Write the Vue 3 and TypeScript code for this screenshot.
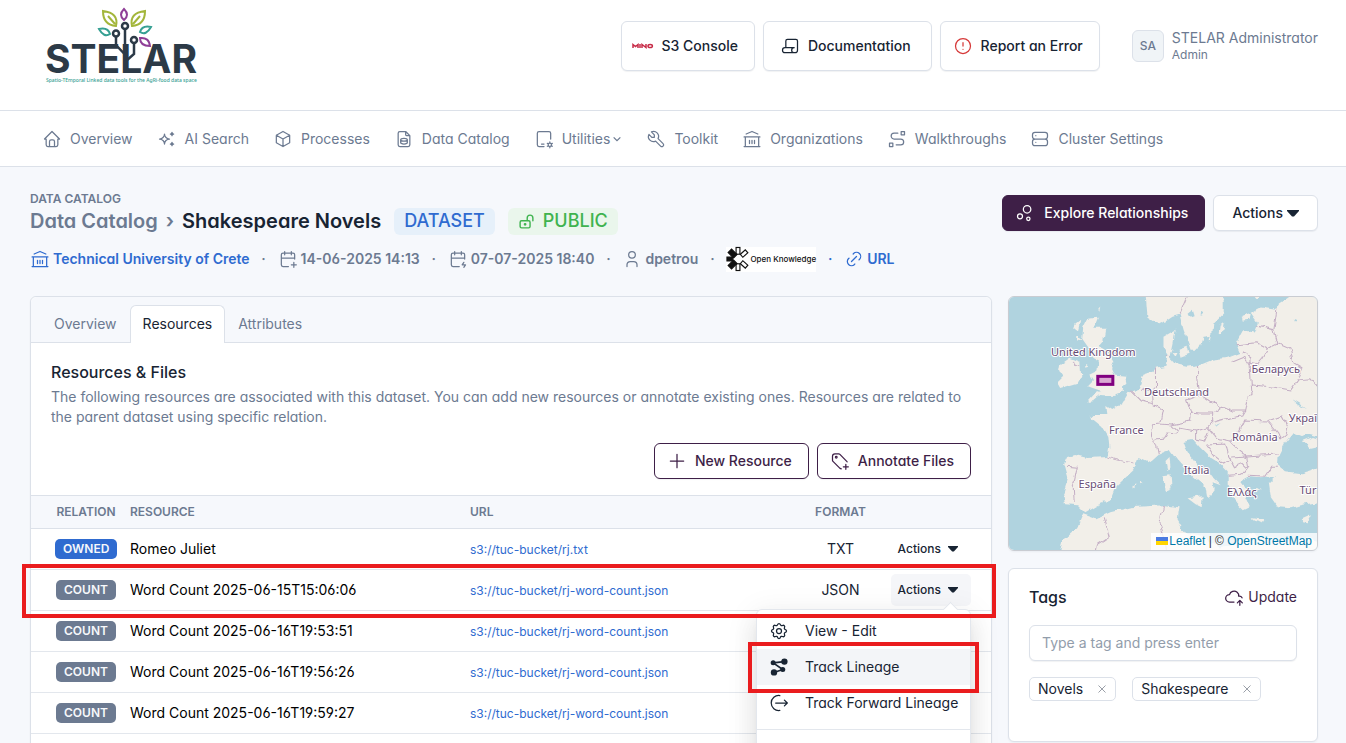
<script setup lang="ts">
import { ref } from 'vue'

interface NavItem { label: string; icon: string; caret?: boolean }
interface Resource { relation: 'OWNED' | 'COUNT'; name: string; url: string; format: string; open?: boolean }

const icons: Record<string, string> = {
  home: 'M5 12H3l9-9l9 9h-2M5 12v7a2 2 0 0 0 2 2h10a2 2 0 0 0 2-2v-7M9 21v-6a2 2 0 0 1 2-2h2a2 2 0 0 1 2 2v6',
  sparkles: 'M16 18a2 2 0 0 1 2 2a2 2 0 0 1 2-2a2 2 0 0 1-2-2a2 2 0 0 1-2 2zM16 6a2 2 0 0 1 2 2a2 2 0 0 1 2-2a2 2 0 0 1-2-2a2 2 0 0 1-2 2zM9 18a6 6 0 0 1 6-6a6 6 0 0 1-6-6a6 6 0 0 1-6 6a6 6 0 0 1 6 6z',
  box: 'M12 3l8 4.5v9l-8 4.5l-8-4.5v-9zM12 12l8-4.5M12 12v9M12 12L4 7.5',
  fileDb: 'M14 3v4a1 1 0 0 0 1 1h4M17 21H7a2 2 0 0 1-2-2V5a2 2 0 0 1 2-2h7l5 5v11a2 2 0 0 1-2 2zM8 12.8a4 1.7 0 1 0 8 0a4 1.7 0 1 0-8 0M8 12.8v3.5c0 1 1.8 1.7 4 1.7s4-.7 4-1.7v-3.5',
  tabletCog: 'M12 21H6a2 2 0 0 1-2-2V5a2 2 0 0 1 2-2h12a2 2 0 0 1 2 2v7M9 18h3M17 19a2 2 0 1 0 4 0a2 2 0 1 0-4 0M19 15.5V17M19 21v1.5M22 17.25l-1.3.75M17.3 20l-1.3.75M16 17.25l1.3.75M20.7 20l1.3.75',
  tool: 'M7 10h3V7L6.5 3.5a6 6 0 0 1 8 8l6 6a2 2 0 0 1-3 3l-6-6a6 6 0 0 1-8-8z',
  bank: 'M5 6l7-3l7 3M2.5 9.5h19M4 9.5V21M20 9.5V21M2.5 21h19M9 13.5v4M12 13.5v4M15 13.5v4',
  route: 'M3 17h4v4H3zM17 3h4v4h-4zM11 19h5.5a3.5 3.5 0 0 0 0-7h-8a3.5 3.5 0 0 1 0-7H13',
  server: 'M6 4h12a3 3 0 0 1 3 3v2a3 3 0 0 1-3 3H6a3 3 0 0 1-3-3V7a3 3 0 0 1 3-3zM6 12h12a3 3 0 0 1 3 3v2a3 3 0 0 1-3 3H6a3 3 0 0 1-3-3v-2a3 3 0 0 1 3-3zM7 8v.01M7 16v.01',
  script: 'M17 20H6a3 3 0 0 1 0-6h11a3 3 0 0 0 0 6h1a3 3 0 0 0 3-3V6a2 2 0 0 0-2-2H9a2 2 0 0 0-2 2v8',
  alert: 'M3 12a9 9 0 1 0 18 0a9 9 0 0 0-18 0M12 8v4M12 16v.01',
  calPlus: 'M12.5 21H6a2 2 0 0 1-2-2V7a2 2 0 0 1 2-2h12a2 2 0 0 1 2 2v5M16 3v4M8 3v4M4 11h16M16 19h6M19 16v6',
  calBolt: 'M13.5 21H6a2 2 0 0 1-2-2V7a2 2 0 0 1 2-2h12a2 2 0 0 1 2 2v5M16 3v4M8 3v4M4 11h16M19 16l-2 3h4l-2 3',
  user: 'M8 7a4 4 0 1 0 8 0a4 4 0 0 0-8 0M6 21v-2a4 4 0 0 1 4-4h4a4 4 0 0 1 4 4v2',
  link: 'M9 15l6-6M11 6l.463-.536a5 5 0 0 1 7.071 7.072L18 13M13 18l-.397.534a5.068 5.068 0 0 1-7.127 0a4.972 4.972 0 0 1 0-7.071L6 11',
  lockOpen: 'M3 13a2 2 0 0 1 2-2h10a2 2 0 0 1 2 2v6a2 2 0 0 1-2 2H5a2 2 0 0 1-2-2zM9 16a1 1 0 1 0 2 0a1 1 0 0 0-2 0M13 11V7a4 4 0 1 1 8 0v4',
  bubbles: 'M3 16a3 3 0 1 0 6 0a3 3 0 1 0-6 0M14 19a2 2 0 1 0 4 0a2 2 0 1 0-4 0M10 7.5a4.5 4.5 0 1 0 9 0a4.5 4.5 0 1 0-9 0',
  plus: 'M12 4v16M4 12h16',
  tagPlus: 'M6.5 7.5a1 1 0 1 0 2 0a1 1 0 1 0-2 0M20.5 13l-.1-.3l-8.5-8.7a2 2 0 0 0-1.4-.6H6a3 3 0 0 0-3 3v4.6a2 2 0 0 0 .6 1.4l8.4 8.4l1.5.6M16 19h6M19 16v6',
  cloudUp: 'M12 18H6.657C4.085 18 2 16 2 13.517c0-2.475 2.085-4.482 4.657-4.482c.393-1.762 1.794-3.2 3.675-3.773c1.88-.572 3.956-.193 5.444 1c1.488 1.19 2.162 3.007 1.77 4.769h.99c1.38 0 2.573.813 3.13 1.99M19 22v-6M22 19l-3-3l-3 3',
  gear: 'M10.325 4.317c.426-1.756 2.924-1.756 3.35 0a1.724 1.724 0 0 0 2.573 1.066c1.543-.94 3.31.826 2.37 2.37a1.724 1.724 0 0 0 1.065 2.572c1.756.426 1.756 2.924 0 3.35a1.724 1.724 0 0 0-1.066 2.573c.94 1.543-.826 3.31-2.37 2.37a1.724 1.724 0 0 0-2.572 1.065c-.426 1.756-2.924 1.756-3.35 0a1.724 1.724 0 0 0-2.573-1.066c-1.543.94-3.31-.826-2.37-2.37a1.724 1.724 0 0 0-1.065-2.572c-1.756-.426-1.756-2.924 0-3.35a1.724 1.724 0 0 0 1.066-2.573c-.94-1.543.826-3.31 2.37-2.37c1 .608 2.296.07 2.572-1.065zM9 12a3 3 0 1 0 6 0a3 3 0 0 0-6 0',
  forward: 'M13 3.1a9 9 0 1 0 0 17.8M8 12h14M18.5 8.5l3.5 3.5l-3.5 3.5',
  x: 'M5 5l14 14M19 5L5 19',
  chevron: 'M4 8l8 8l8-8',
}

const nav: NavItem[] = [
  { label: 'Overview', icon: 'home' },
  { label: 'AI Search', icon: 'sparkles' },
  { label: 'Processes', icon: 'box' },
  { label: 'Data Catalog', icon: 'fileDb' },
  { label: 'Utilities', icon: 'tabletCog', caret: true },
  { label: 'Toolkit', icon: 'tool' },
  { label: 'Organizations', icon: 'bank' },
  { label: 'Walkthroughs', icon: 'route' },
  { label: 'Cluster Settings', icon: 'server' },
]

const resources: Resource[] = [
  { relation: 'OWNED', name: 'Romeo Juliet', url: 's3://tuc-bucket/rj.txt', format: 'TXT' },
  { relation: 'COUNT', name: 'Word Count 2025-06-15T15:06:06', url: 's3://tuc-bucket/rj-word-count.json', format: 'JSON', open: true },
  { relation: 'COUNT', name: 'Word Count 2025-06-16T19:53:51', url: 's3://tuc-bucket/rj-word-count.json', format: 'JSON' },
  { relation: 'COUNT', name: 'Word Count 2025-06-16T19:56:26', url: 's3://tuc-bucket/rj-word-count.json', format: 'JSON' },
  { relation: 'COUNT', name: 'Word Count 2025-06-16T19:59:27', url: 's3://tuc-bucket/rj-word-count.json', format: 'JSON' },
]

const tags = ref<string[]>(['Novels', 'Shakespeare'])
const draft = ref('')

function addTag() {
  const value = draft.value.trim()
  if (value && !tags.value.includes(value)) tags.value.push(value)
  draft.value = ''
}
function removeTag(tag: string) {
  tags.value = tags.value.filter((t) => t !== tag)
}

const land: string[] = [
  // Great Britain, Ireland and the Hebrides
  'M78 22L89 21L85 31L96 31L94 43L89 49L99 56L104 65L101 68L106 80L116 81L117 86L111 91L115 95L104 99L91 98L84 104L78 105L86 96L92 94L78 89L84 83L80 78L88 74L89 66L82 62L80 52L73 42L74 30z',
  'M51 68L61 61L71 65L72 81L69 86L51 91L48 86L54 80L50 74z',
  'M66 27L71 23L69 32L65 33zM68 38L73 42L68 44zM77 67L80 70L77 71zM89 12L91 10L90 14z',
  // Mainland Europe
  'M56 207L54 196L59 180L55 166L58 160L66 158L78 161L98 160L100 150L99 140L93 130L82 121L84 117L98 117L97 109L103 113L113 106L119 96L129 92L134 78L143 75L146 72L156 70L158 58L154 52L154 40L166 33L164 46L161 60L168 68L178 70L191 68L203 63L218 61L231 56L227 46L234 33L244 36L248 26L241 16L251 11L266 13L270 6L279 0V-6H315V139H307L300 137L291 139L283 136L274 147L269 157L268 168L275 174L291 176L307 171H315V205H307L291 208L281 211L268 210L261 200L259 186L266 179L248 180L240 179L231 184L237 192L234 197L239 209L233 212L226 205L222 196L218 186L218 174L210 166L200 160L190 150L184 143L174 145L178 156L191 172L204 180L212 188L204 185L205 193L198 202L196 190L184 180L169 164L161 153L149 158L141 165L129 160L124 173L106 190L101 203L88 208L76 215L69 208z',
  // Scandinavia and the Baltic islands
  'M136 -4L138 20L151 28L163 20L170 18L174 33L181 53L189 53L193 41L201 40L203 27L214 16L214 5L211 -4z',
  'M169 52L177 49L179 57L171 60zM163 56L168 56L166 60zM211 29L215 26L213 37L210 36zM199 43L202 35L200 45zM232 20L240 17L239 24L233 25zM243 -2L255 -2L247 3z',
  // Mediterranean islands
  'M156 164L160 160L161 170L158 174zM154 178L161 177L162 191L155 194zM178 201L193 199L192 210L186 207z',
  'M241 220L256 222L254 225L242 222zM292 222L301 218L297 226L292 225zM122 190L127 187L126 191zM130 185L133 186L131 187zM246 190L251 193L247 194z',
  // Crimea
  'M293 144L303 140L309 142V150L300 152z',
  // North Africa
  'M50 260L53 243L68 230L74 216L88 221L101 215L121 210L154 208L169 210L167 223L174 235L190 238L210 250L225 246L240 236L270 244L300 240L310 244V260z',
]

const borders: string[] = [
  'M178 -2L170 18',
  'M64 64L66 70L71 70',
  'M98 160L109 163L124 166',
  'M58 169L68 170L66 180L64 190L65 205',
  'M122 94L132 104L143 107L142 98L146 90L146 72',
  'M132 92L142 94M143 107L153 112L150 127L143 128L142 138L147 147L149 157',
  'M150 127L162 128L180 124L181 115L190 116L203 116L203 125L198 131L186 134L170 131L167 137L158 136L155 141L146 142',
  'M162 128L168 134M181 115L177 103L190 98L188 80L188 68',
  'M156 59L162 60M190 98L200 105L213 110L222 114L235 114L237 104L242 95L241 80L240 60L234 56',
  'M213 110L205 116M204 125L216 122L232 119L235 114',
  'M198 131L207 142L221 145L230 134L235 123L258 124L272 119L278 130L276 138L270 143',
  'M258 124L268 136L270 143M186 134L186 142L195 144L199 135M197 148L216 147L219 159L225 170',
  'M197 148L204 158L214 166L222 160L236 159L252 158L268 157',
  'M221 145L228 152L236 159L238 170L232 178L218 179M225 169L232 166L237 171M238 178L256 179L262 170L268 170',
  'M240 88L263 90L281 93L288 83L300 82L307 90',
  'M240 66L232 60L220 65M227 48L247 46L258 52L253 61L247 68L238 66M247 46L258 52L268 47L264 33L246 29M264 33L267 13M268 47L280 52L284 66L292 71L287 83',
  'M95 220L100 240L88 248L86 260M154 208L150 228L156 246L158 260',
]
</script>

<template>
  <div class="page">
    <header class="topbar">
      <a href="#" class="brand" aria-label="STELAR home">
        <svg width="160" height="80" viewBox="0 0 160 80" aria-hidden="true">
          <text x="3" y="67" class="brand-word">STELAR</text>
          <text x="4" y="76" class="brand-tag">Spatio-TEmporal Linked data tools for the AgRi-food data space</text>
          <g fill="none" stroke="#2c3a47" stroke-width="2.5">
            <path d="M83 24V64" /><path d="M74 31v8l8.500 9" /><path d="M92 38v10l-8 7" />
            <circle cx="83" cy="20" r="3" /><circle cx="74" cy="27.500" r="3" /><circle cx="92" cy="34" r="3" />
          </g>
          <g fill="none" stroke-width="2">
            <path stroke="#8f3f97" d="M82 3q-6 6 0 11q6-5 0-11z" />
            <path stroke="#a3b63b" d="M61 5q0 14 13 15q3-13-13-15zM103 5q0 14-13 15q-3-13 13-15zM66 10l7 8M98 10l-7 8" />
            <path stroke="#36a093" d="M57 23q5 9 11 5q-2-7-11-5zM109 21q-5 9-11 5q2-7 11-5z" />
            <path stroke="#8f3f97" d="M98 32q9-1 10 8q-10 0-10-8z" />
          </g>
        </svg>
      </a>
      <div class="top-actions">
        <a href="#" class="btn tall s3">
          <svg width="22" height="8" viewBox="0 0 22 8" fill="none" stroke="#c72c48" stroke-width="1.5" aria-hidden="true"><path d="M1 6V2.500L3.500 4.500L6 2.500V6M8 2v4M10 6V2.500l4 3V2M16 4a2.200 1.600 0 1 0 4.400 0a2.200 1.600 0 1 0-4.400 0" /></svg>
          S3 Console
        </a>
        <a href="#" class="btn tall doc">
          <svg class="icon" viewBox="0 0 24 24"><path :d="icons.script" /></svg>Documentation
        </a>
        <a href="#" class="btn tall err">
          <svg class="icon danger" viewBox="0 0 24 24"><path :d="icons.alert" /></svg>Report an Error
        </a>
      </div>
      <a href="#" class="account">
        <span class="avatar">SA</span>
        <span class="who"><span>STELAR Administrator</span><small>Admin</small></span>
      </a>
    </header>

    <nav class="menu" aria-label="Main">
      <a v-for="item in nav" :key="item.label" href="#" class="menu-link">
        <svg class="icon" viewBox="0 0 24 24"><path :d="icons[item.icon]" /></svg>
        <span>{{ item.label }}</span>
        <svg v-if="item.caret" class="caret-thin" viewBox="0 0 24 24"><path :d="icons.chevron" /></svg>
      </a>
    </nav>

    <main class="content">
      <div class="page-head">
        <div class="head-text">
          <div class="pretitle">DATA CATALOG</div>
          <h1 class="title">
            <a href="#">Data Catalog</a><span class="sep">›</span><span>Shakespeare Novels</span>
            <span class="badge-lg blue">DATASET</span>
            <span class="badge-lg green"><svg class="icon" viewBox="0 0 24 24"><path :d="icons.lockOpen" /></svg>PUBLIC</span>
          </h1>
          <div class="meta">
            <a href="#" class="meta-item"><svg class="icon" viewBox="0 0 24 24"><path :d="icons.bank" /></svg>Technical University of Crete</a>
            <span class="dot">·</span>
            <span class="meta-item"><svg class="icon" viewBox="0 0 24 24"><path :d="icons.calPlus" /></svg>14-06-2025 14:13</span>
            <span class="dot">·</span>
            <span class="meta-item"><svg class="icon" viewBox="0 0 24 24"><path :d="icons.calBolt" /></svg>07-07-2025 18:40</span>
            <span class="dot">·</span>
            <span class="meta-item"><svg class="icon" viewBox="0 0 24 24"><path :d="icons.user" /></svg>dpetrou</span>
            <span class="dot">·</span>
            <span class="license">
              <svg width="24" height="26" viewBox="0 0 25 26" aria-hidden="true">
                <g stroke="#111" stroke-width="1.2">
                  <rect x="10.5" y="1" width="4" height="7" fill="#fff" />
                  <rect x="10.5" y="18" width="4" height="7" fill="#fff" />
                  <rect x="1" y="11" width="6" height="4" fill="#111" />
                  <rect x="10" y="1" width="5" height="8" fill="#111" transform="rotate(-45 12.5 13)" />
                  <rect x="10" y="1" width="5" height="8" fill="#111" transform="rotate(-135 12.5 13)" />
                  <rect x="10.5" y="1" width="4" height="7" fill="#fff" transform="rotate(48 12.5 13)" />
                  <rect x="10.5" y="1" width="4" height="7" fill="#fff" transform="rotate(132 12.5 13)" />
                </g>
              </svg>
              Open Knowledge
            </span>
            <span class="dot blue-dot">·</span>
            <a href="#" class="meta-item"><svg class="icon" viewBox="0 0 24 24"><path :d="icons.link" /></svg>URL</a>
          </div>
        </div>
        <div class="head-actions">
          <button type="button" class="btn primary"><svg class="icon" viewBox="0 0 24 24"><path :d="icons.bubbles" /></svg>Explore Relationships</button>
          <button type="button" class="btn head-menu">Actions<svg class="tri" viewBox="0 0 12 7"><path d="M0 0h12v1L7 6.500H5L0 1z" /></svg></button>
        </div>
      </div>

      <div class="columns">
        <section class="card main-card">
          <div class="tabs" role="tablist">
            <button type="button" role="tab" class="tab">Overview</button>
            <button type="button" role="tab" class="tab active" aria-selected="true">Resources</button>
            <button type="button" role="tab" class="tab">Attributes</button>
          </div>
          <div class="intro">
            <h2>Resources &amp; Files</h2>
            <p>The following resources are associated with this dataset. You can add new resources or annotate existing ones. Resources are related to the parent dataset using specific relation.</p>
            <div class="intro-actions">
              <button type="button" class="btn outline"><svg class="icon" viewBox="0 0 24 24"><path :d="icons.plus" /></svg>New Resource</button>
              <button type="button" class="btn outline"><svg class="icon" viewBox="0 0 24 24"><path :d="icons.tagPlus" /></svg>Annotate Files</button>
            </div>
          </div>
          <table class="grid">
            <thead>
              <tr><th class="c-rel">RELATION</th><th class="c-name">RESOURCE</th><th>URL</th><th class="c-format">FORMAT</th><th class="c-act" aria-label="Actions"></th></tr>
            </thead>
            <tbody>
              <tr v-for="row in resources" :key="row.name" :class="{ marked: row.open }">
                <td class="c-rel"><span class="badge" :class="row.relation.toLowerCase()">{{ row.relation }}</span></td>
                <td>{{ row.name }}</td>
                <td><a href="#" class="path">{{ row.url }}</a></td>
                <td class="c-format">{{ row.format }}</td>
                <td class="c-act">
                  <button type="button" class="row-btn" :class="{ open: row.open }" :aria-expanded="!!row.open">Actions<svg class="tri small" viewBox="0 0 12 7"><path d="M0 0h12v1L7 6.500H5L0 1z" /></svg></button>
                  <div v-if="row.open" class="dropdown">
                    <a href="#" class="drop-item"><svg class="icon" viewBox="0 0 24 24"><path :d="icons.gear" /></svg>View - Edit</a>
                    <a href="#" class="drop-item hover">
                      <svg class="icon" viewBox="0 0 24 24"><path d="M5 7l13.500-1.500M5 7l11.500 8M16.500 15L6 18.500" stroke-width="2" /><g fill="currentColor" stroke="none"><circle cx="5" cy="7" r="3" /><circle cx="18.5" cy="5.5" r="3.8" /><circle cx="16.5" cy="15" r="3" /><circle cx="6" cy="18.5" r="3.8" /></g></svg>Track Lineage
                      <span class="callout item-callout"></span>
                    </a>
                    <a href="#" class="drop-item"><svg class="icon" viewBox="0 0 24 24"><path :d="icons.forward" /></svg>Track Forward Lineage</a>
                    <hr />
                  </div>
                  <span v-if="row.open" class="callout row-callout"></span>
                </td>
              </tr>
            </tbody>
          </table>
        </section>

        <aside class="side">
          <div class="card map">
            <svg class="map-art" viewBox="0 0 307 253" preserveAspectRatio="xMidYMid slice" role="img" aria-label="Map of Europe">
              <defs>
                <filter id="coast" x="-5%" y="-5%" width="110%" height="110%">
                  <feTurbulence type="fractalNoise" baseFrequency="0.12" numOctaves="2" seed="4" result="n" />
                  <feDisplacementMap in="SourceGraphic" in2="n" scale="6" xChannelSelector="R" yChannelSelector="G" />
                </filter>
              </defs>
              <rect width="307" height="253" fill="#b0d3df" />
              <g filter="url(#coast)">
                <path v-for="(d, i) in land" :key="'l' + i" :d="d" fill="#f2efe9" />
                <path fill="#b0d3df" d="M178 17L183 13L185 19L180 21zM192 12L194 17L191 18zM284 23L287 24L285 26zM281 102L288 106L297 112L288 108zM204 129L211 126L206 130z" />
                <path v-for="(d, i) in borders" :key="'b' + i" :d="d" fill="none" stroke="#c3adc4" stroke-width="1" />
              </g>
              <rect x="88.5" y="79.5" width="15" height="8" fill="#d9a9d2" stroke="#800080" stroke-width="3" />
              <g class="map-label">
                <text x="84" y="59">United Kingdom</text><text x="167" y="99">Deutschland</text><text x="117" y="137">France</text>
                <text x="266" y="76">Беларусь</text><text x="293" y="125">Украї</text><text x="245" y="144">România</text>
                <text x="187" y="177">Italia</text><text x="88" y="191">España</text><text x="232" y="199">Ελλάς</text><text x="298" y="197">Tür</text>
              </g>
            </svg>
            <div class="credit">
              <svg width="12" height="8" viewBox="0 0 12 8" aria-hidden="true"><path fill="#4c7be1" d="M0 0h12v4H0z" /><path fill="#ffd500" d="M0 4h12v4H0z" /></svg>
              <a href="#">Leaflet</a> | © <a href="#">OpenStreetMap</a>
            </div>
          </div>

          <div class="card tags">
            <div class="tags-head">
              <label for="tag-input">Tags</label>
              <button type="button" class="link-btn"><svg class="icon" viewBox="0 0 24 24"><path :d="icons.cloudUp" /></svg>Update</button>
            </div>
            <input id="tag-input" v-model="draft" type="text" placeholder="Type a tag and press enter" @keydown.enter="addTag" />
            <div class="chips">
              <span v-for="tag in tags" :key="tag" class="chip">{{ tag }}
                <button type="button" :aria-label="'Remove ' + tag" @click="removeTag(tag)"><svg viewBox="0 0 24 24"><path :d="icons.x" /></svg></button>
              </span>
            </div>
          </div>
        </aside>
      </div>
    </main>
  </div>
</template>

<style>
body { margin: 0; background: #f6f8fc; }
</style>

<style scoped>
.page {
  --ink: #182433;
  --muted: #6c7a91;
  --line: #dce1e9;
  --plum: #3e1f47;
  --blue: #2f6bd0;
  min-height: 100vh;
  background: #f6f8fc;
  color: var(--ink);
  font: 14px/20px Inter, "Noto Sans", sans-serif;
  font-feature-settings: "cv03", "cv04", "cv11";
}
* { box-sizing: border-box; }
a { color: inherit; text-decoration: none; }
button { font: inherit; font-feature-settings: inherit; color: inherit; cursor: pointer; }
.icon { width: 20px; height: 20px; flex: none; fill: none; stroke: currentColor; stroke-width: 1.5; stroke-linecap: round; stroke-linejoin: round; }

.topbar { display: flex; align-items: center; padding: 6px 28px 24px 42px; background: #fff; border-bottom: 1px solid var(--line); }
.brand { display: block; height: 80px; }
.brand svg { display: block; }
.brand-word { font: 700 39px Inter, sans-serif; fill: #2c3a47; }
.brand-tag { font: 500 5px "Noto Sans", sans-serif; fill: #36a093; }
.top-actions { display: flex; gap: 8px; margin-left: auto; }
.btn {
  display: inline-flex; align-items: center; justify-content: center; gap: 8px; height: 36px; padding: 0 16px;
  background: #fff; border: 1px solid var(--line); border-radius: 6px; font-weight: 500; box-shadow: 0 1px 1px rgba(24, 36, 51, .06);
}
.tall { height: 50px; }
.s3 { padding-left: 10px; }
.doc { padding-right: 20px; }
.err { padding-left: 12px; }
.danger { color: #d63939; }
.account { display: flex; gap: 8px; align-items: center; margin-left: 32px; color: var(--muted); }
.avatar { display: grid; place-items: center; width: 32px; height: 32px; background: #f0f4f7; border: 1px solid var(--line); border-radius: 6px; font-size: 12px; font-weight: 500; }
.who { display: flex; flex-direction: column; line-height: 17px; }
.who small { font-size: 12px; }

.menu { display: flex; gap: 24px; align-items: center; height: 56px; padding: 0 42px; background: #fff; border-bottom: 1px solid var(--line); color: var(--muted); }
.menu-link { display: flex; align-items: center; gap: 8px; }
.caret-thin { width: 10px; height: 10px; margin-left: -6px; fill: none; stroke: currentColor; stroke-width: 3; }

.content { padding: 24px 28px 0 30px; }
.page-head { display: flex; justify-content: space-between; }
.pretitle { font-size: 12px; font-weight: 600; line-height: 16px; color: var(--muted); }
.title { display: flex; align-items: center; height: 28px; margin: 0; font-size: 20px; line-height: 28px; font-weight: 600; }
.title > a, .sep { color: var(--muted); }
.sep { margin: 0 8px; }
.badge-lg { display: inline-flex; align-items: center; gap: 8px; height: 27px; margin-left: 13px; padding: 0 10px; border-radius: 6px; font-size: 18px; font-weight: 500; }
.badge-lg .icon { width: 17px; height: 17px; stroke-width: 2; }
.blue { background: #e6f0fa; color: var(--blue); }
.green { background: #eaf6ec; color: #3fb34f; }
.meta { display: flex; align-items: center; height: 26px; margin-top: 11px; color: var(--muted); font-weight: 600; }
.meta-item { display: flex; align-items: center; gap: 3px; }
.meta a { color: var(--blue); }
.dot { width: 28px; text-align: center; }
.blue-dot { color: var(--blue); }
.license { display: flex; align-items: center; height: 25px; background: #fff; color: #111; font-size: 8px; font-weight: 500; }
.head-actions { display: flex; gap: 8px; padding-top: 4px; }
.head-menu { gap: 4px; padding: 0 18px; }
.primary { padding: 0 16px 0 12px; gap: 9px; background: var(--plum); border-color: var(--plum); color: #fff; }
.tri { width: 12px; height: 7px; fill: currentColor; }
.small { width: 10px; height: 6px; }

.columns { display: grid; grid-template-columns: minmax(0, 962fr) minmax(0, 310fr); gap: 16px; margin-top: 24px; align-items: start; }
.card { background: #fff; border: 1px solid var(--line); border-radius: 6px; box-shadow: 0 1px 2px rgba(24, 36, 51, .05); }
.main-card { padding-bottom: 40px; }
.tabs { display: flex; padding: 8px 10px 0; height: 46px; background: #f6f8fc; border-bottom: 1px solid var(--line); border-radius: 6px 6px 0 0; }
.tab { height: 38px; padding: 0 12px 2px; background: transparent; border: 1px solid transparent; border-bottom: 0; border-radius: 6px 6px 0 0; color: var(--muted); }
.tab.active { background: #fff; border-color: var(--line); color: var(--ink); }
.intro { padding: 19px 20px 16px; }
.intro h2 { margin: 0; font-size: 16px; font-weight: 500; line-height: 20px; }
.intro p { margin: 5px 0 16px; color: var(--muted); }
.intro-actions { display: flex; justify-content: flex-end; gap: 8px; }
.outline { padding: 0 16px 0 12px; border-color: var(--plum); color: var(--plum); }

.grid { width: 100%; table-layout: fixed; border-collapse: separate; border-spacing: 0; color: #000; }
.grid th { height: 34px; padding: 0 8px; text-align: left; font-size: 12px; font-weight: 600; color: var(--muted); background: #f6f8fc; border-top: 1px solid var(--line); border-bottom: 1px solid var(--line); }
.grid td { height: 41px; padding: 0 8px; border-bottom: 1px solid #e3e7ed; white-space: nowrap; }
.grid .c-rel { width: 91px; padding: 0 5px 0 24px; text-align: center; }
.grid td.c-rel { padding-bottom: 2px; }
.grid .c-name { width: 340px; }
.grid .c-format { width: 83px; padding: 0; text-align: center; color: var(--ink); }
.grid th.c-format { color: var(--muted); }
.grid .c-act { width: 109px; padding: 0 20px 0 8px; text-align: right; }
.marked { position: relative; }
.badge { display: inline-block; height: 20px; padding: 0 8px; border-radius: 5px; color: #f6f8fb; font-size: 12px; font-weight: 600; line-height: 20px; vertical-align: middle; }
.owned { background: var(--blue); }
.count { background: var(--muted); }
.path { color: var(--blue); font-size: 12px; }
.row-btn { display: inline-flex; align-items: center; gap: 7px; height: 32px; padding: 0 13px 0 7px; background: transparent; border: 0; border-radius: 5px; color: var(--ink); font-size: 12px; font-weight: 500; vertical-align: middle; }
.row-btn.open { background: #f5f6f9; }
.dropdown { position: absolute; z-index: 2; top: 39px; right: 20px; width: 215px; height: 200px; padding: 3px 0; background: #fff; border: 1px solid #e3e7ed; border-radius: 6px; box-shadow: 0 16px 24px 2px rgba(0, 0, 0, .07), 0 6px 30px 5px rgba(0, 0, 0, .06), 0 8px 10px -5px rgba(0, 0, 0, .1); }
.dropdown::before { content: ""; position: absolute; top: -6px; right: 14px; width: 10px; height: 10px; background: #fff; border: solid #e3e7ed; border-width: 1px 0 0 1px; transform: rotate(45deg); }
.drop-item { position: relative; display: flex; align-items: center; gap: 16px; height: 36px; padding: 0 12px; color: var(--ink); }
.drop-item.hover { background: #f3f5f8; }
.dropdown hr { margin: 8px 0; border: 0; border-top: 1px solid #e3e7ed; }
.callout { position: absolute; z-index: 3; border: 4px solid #ea1c1e; pointer-events: none; }
.row-callout { inset: -6px -5px -7px -9px; }
.item-callout { inset: -7px -9px -8px -9px; }

.side { display: grid; gap: 17px; }
.map { position: relative; height: 255px; overflow: hidden; border-color: #c9ccd2; }
.map-art { display: block; width: 100%; height: 100%; }
.map-label { font: 11px "Noto Sans", sans-serif; fill: #684c75; text-anchor: middle; stroke: #fff; stroke-width: 2px; stroke-linejoin: round; paint-order: stroke; }
.credit { position: absolute; right: 0; bottom: 0; padding: 0 5px; background: rgba(255, 255, 255, .8); color: #333; font: 12px/17px "Liberation Sans", Arial, sans-serif; }
.credit svg { margin-right: 1px; }
.credit a { color: #0078a8; }
.tags { padding: 18px 20px 40px; }
.tags-head { display: flex; justify-content: space-between; align-items: center; height: 20px; margin-bottom: 18px; }
.tags-head label { font-size: 16px; font-weight: 500; }
.link-btn { display: flex; align-items: center; gap: 4px; padding: 0; background: none; border: 0; color: var(--plum); }
.tags input { display: block; width: 100%; height: 36px; padding: 0 12px 2px; border: 1px solid var(--line); border-radius: 6px; font: inherit; font-feature-settings: normal; color: var(--ink); box-shadow: 0 1px 1px rgba(24, 36, 51, .06); }
.tags input::placeholder { color: #929dab; opacity: 1; }
.chips { display: flex; flex-wrap: wrap; gap: 16px; margin-top: 16px; }
.chip { display: inline-flex; align-items: center; gap: 13px; height: 24px; padding: 0 7px 0 8px; border: 1px solid var(--line); border-radius: 5px; }
.chip button { display: grid; place-items: center; width: 12px; height: 12px; padding: 0; background: none; border: 0; }
.chip svg { width: 12px; height: 12px; fill: none; stroke: #9a9fa8; stroke-width: 2; }
</style>
